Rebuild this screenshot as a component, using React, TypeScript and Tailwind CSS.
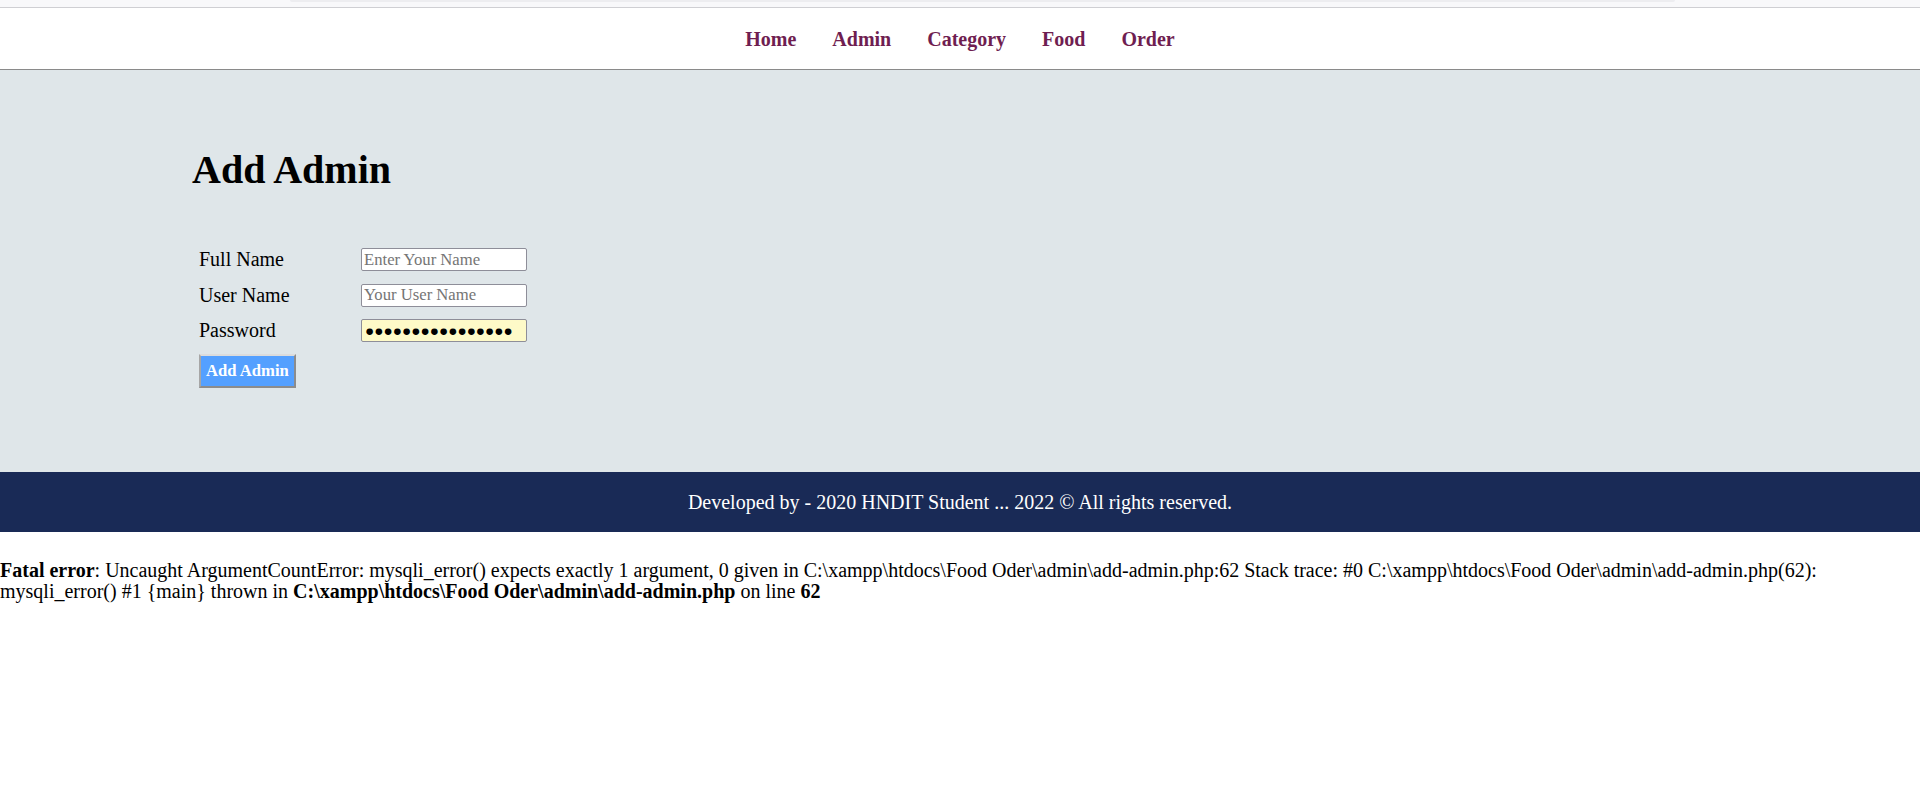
import React from 'react';

const serif = "font-['Liberation_Serif','Times_New_Roman',serif]";

const navItems = ['Home', 'Admin', 'Category', 'Food', 'Order'];

export default function App() {
  return (
    <div className={`min-h-[797px] bg-white text-black ${serif} text-[20px] leading-[1.15]`}>
      {/* browser strip */}
      <div className="h-[8px] bg-[#f8f8fa] border-b border-[#cfcfd3] flex">
        <div className="ml-[290px] w-[1385px] h-[2px] bg-[#ededf0] rounded-b-[3px]" />
      </div>

      {/* Menu */}
      <div className="bg-white border-b border-[#8a8a8a] pt-[20px] pb-[18px]">
        <ul className="flex justify-center gap-[36px] font-bold text-[#6f1e51]">
          {navItems.map((item) => (
            <li key={item}>
              <a href="#" className="text-[#6f1e51]">
                {item}
              </a>
            </li>
          ))}
        </ul>
      </div>

      {/* Main content */}
      <div className="bg-[#dfe6e9] h-[402px] pt-[77px]">
        <div className="w-[80%] mx-auto">
          <h1 className="text-[40px] font-bold leading-[46px]">Add Admin</h1>

          <form className="mt-[49px] flex flex-col" onSubmit={(e) => e.preventDefault()}>
            <div className="flex items-center h-[35.5px] pl-[7px]">
              <label className="w-[162px]">Full Name</label>
              <input
                type="text"
                placeholder="Enter Your Name"
                className={`w-[166px] h-[23px] px-[2px] bg-white border border-[#8e8e99] rounded-[2px] text-[16.67px] ${serif} placeholder:text-[#757575]`}
              />
            </div>
            <div className="flex items-center h-[35.5px] pl-[7px]">
              <label className="w-[162px]">User Name</label>
              <input
                type="text"
                placeholder="Your User Name"
                className={`w-[166px] h-[23px] px-[2px] bg-white border border-[#8e8e99] rounded-[2px] text-[16.67px] ${serif} placeholder:text-[#757575]`}
              />
            </div>
            <div className="flex items-center h-[35.5px] pl-[7px]">
              <label className="w-[162px]">Password</label>
              <input
                type="text"
                readOnly
                aria-label="Password"
                value="●●●●●●●●●●●●●●●●"
                className={`w-[166px] h-[23px] px-[3px] bg-[#fefac8] border border-[#8e8e99] rounded-[2px] text-[15.3px] ${serif}`}
              />
            </div>
            <div className="pt-[5.5px] pl-[7px]">
              <button
                type="submit"
                className="h-[34px] px-[5px] bg-[#54a0ff] text-white font-bold text-[16.67px] border-2 border-solid border-t-[#dcdcdc] border-l-[#a6a6a6] border-r-[#8c8c8c] border-b-[#8c8c8c]"
              >
                Add Admin
              </button>
            </div>
          </form>
        </div>
      </div>

      {/* Footer */}
      <div className="bg-[#192a56] h-[60px] flex items-center justify-center text-white">
        <p>Developed by - 2020 HNDIT Student ... 2022 © All rights reserved.</p>
      </div>

      {/* PHP error output */}
      <div className="pt-[28px] leading-[21px]">
        <b>Fatal error</b>: Uncaught ArgumentCountError: mysqli_error() expects exactly 1 argument, 0 given in
        C:\xampp\htdocs\Food Oder\admin\add-admin.php:62 Stack trace: #0 C:\xampp\htdocs\Food
        Oder\admin\add-admin.php(62): mysqli_error() #1 {'{main}'} thrown in{' '}
        <b>C:\xampp\htdocs\Food Oder\admin\add-admin.php</b> on line <b>62</b>
      </div>
    </div>
  );
}
